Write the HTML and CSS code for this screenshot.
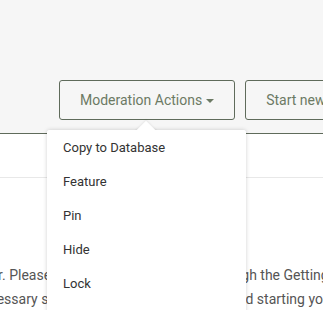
FILE: index.html
```html
<!DOCTYPE html>
<html lang="en">

<head>
    <meta charset="UTF-8">
    <meta name="viewport" content="width=device-width, initial-scale=1.0">
    <title>Moderation</title>
    <link rel="stylesheet" href="styles.css">
</head>

<body>
    <div class="page">
        <div class="topbar">
            <div class="actions">
                <button class="btn">Moderation Actions <span class="caret"></span></button>
                <button class="btn">Start new topic</button>
            </div>
        </div>

        <div class="subnav"></div>

        <div class="content">
            <p class="line line-one">moderator. Please take a moment yet to go through the Getting Started guide</p>
            <p class="line line-two">the necessary settings before posting topics and starting your first topic</p>
        </div>

        <!-- dropdown opened from Moderation Actions -->
        <div class="dropdown">
            <ul>
                <li>Copy to Database</li>
                <li>Feature</li>
                <li>Pin</li>
                <li>Hide</li>
                <li>Lock</li>
                <li>Move</li>
            </ul>
        </div>
    </div>
</body>

</html>
```

FILE: styles.css
```css
:root {
    --top-bg: #f6f6f6;
    --btn-text: #6c7a64;
    --btn-border: #5f6b5b;
    --menu-text: #333333;
    --body-text: #555555;
}

body {
    margin: 0;
    padding: 0;
    font-family: Roboto, 'Liberation Sans', sans-serif;
    background: #ffffff;
    overflow: hidden;
}

.page {
    position: relative;
    width: 323px;
    height: 310px;
    overflow: hidden;
}

.topbar {
    height: 134px;
    background-color: var(--top-bg);
    border-bottom: 1px solid var(--btn-border);
    box-sizing: border-box;
    padding-top: 80px;
}

.actions {
    display: flex;
    gap: 10px;
    padding-left: 59px;
    white-space: nowrap;
}

.btn {
    flex-shrink: 0;
    height: 40px;
    padding: 0 20px;
    background: transparent;
    border: 1px solid var(--btn-border);
    border-radius: 3px;
    color: var(--btn-text);
    font-family: inherit;
    font-size: 14px;
    display: flex;
    align-items: center;
    gap: 4px;
}

.caret {
    width: 0;
    height: 0;
    border-left: 4.5px solid transparent;
    border-right: 4.5px solid transparent;
    border-top: 4.5px solid var(--btn-text);
    margin-top: 1px;
}

.subnav {
    height: 43px;
    border-bottom: 1px solid #e8e8e8;
}

.content {
    padding-top: 85px;
}

.line {
    margin: 0;
    font-size: 14px;
    line-height: 24px;
    color: var(--body-text);
    white-space: nowrap;
}

.line-one {
    margin-left: -62px;
}

.line-two {
    margin-left: -49px;
}

.dropdown {
    position: absolute;
    left: 47px;
    top: 130px;
    width: 199px;
    background: #ffffff;
    border-radius: 3px;
    box-shadow: 0 0 4px rgba(0, 0, 0, 0.18);
}

.dropdown::before {
    content: "";
    position: absolute;
    left: 91px;
    top: -6px;
    width: 16px;
    height: 16px;
    background: #ffffff;
    transform: rotate(45deg);
    box-shadow: -1px -1px 2px rgba(0, 0, 0, 0.06);
}

.dropdown ul {
    position: relative;
    list-style: none;
    margin: 0;
    padding: 1px 0 0;
    background: #ffffff;
    border-radius: 3px;
}

.dropdown li {
    height: 34px;
    line-height: 34px;
    padding-left: 16px;
    font-size: 13px;
    color: var(--menu-text);
}
```
